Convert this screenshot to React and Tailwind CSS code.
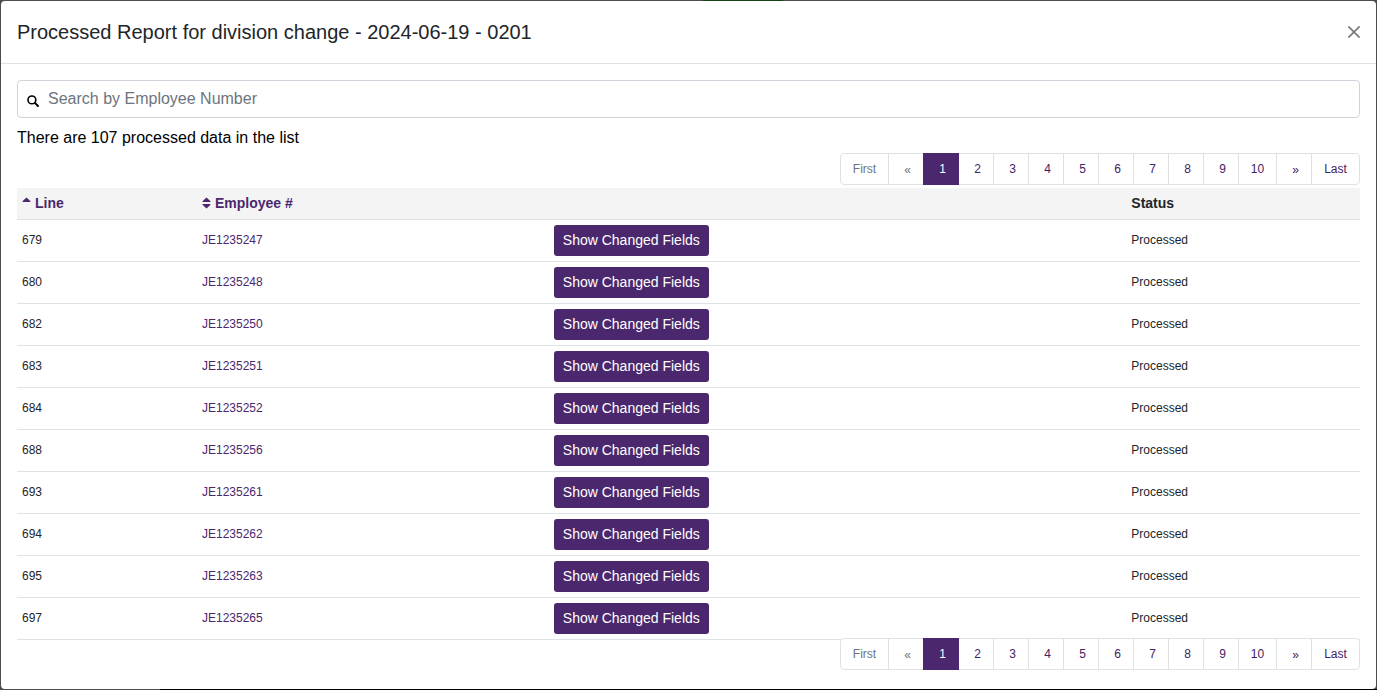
import React, { useState } from "react";

const rows = [
  [679, "JE1235247"],
  [680, "JE1235248"],
  [682, "JE1235250"],
  [683, "JE1235251"],
  [684, "JE1235252"],
  [688, "JE1235256"],
  [693, "JE1235261"],
  [694, "JE1235262"],
  [695, "JE1235263"],
  [697, "JE1235265"],
];

const pages = [1, 2, 3, 4, 5, 6, 7, 8, 9, 10];

function PageButton({ children, className, ...props }) {
  return (
    <li className="-ml-px first:ml-0">
      <button
        type="button"
        className={`flex h-8 items-center justify-center border text-xs ${className}`}
        {...props}
      >
        {children}
      </button>
    </li>
  );
}

function Pagination({ label, className }) {
  const [page, setPage] = useState(1);
  const idle = "border-[#dee2e6] bg-white text-[#3f2263]";
  const muted = "border-[#dee2e6] bg-white text-[#6c757d]";
  return (
    <nav aria-label={label} className={`relative flex justify-end ${className}`}>
      <ul className="flex">
        <PageButton className={`w-[49px] rounded-l ${muted}`} onClick={() => setPage(1)}>
          First
        </PageButton>
        <PageButton
          aria-label="Previous"
          className={`w-9 pt-0.5 pl-[3px] ${muted}`}
          onClick={() => setPage(Math.max(1, page - 1))}
        >
          «
        </PageButton>
        {pages.map((n) => (
          <PageButton
            key={n}
            aria-current={n === page ? "page" : undefined}
            className={`${n === 10 ? "w-[39px]" : "w-9 pl-[3px]"} ${
              n === page ? "relative border-[#4b286d] bg-[#4b286d] text-white" : idle
            }`}
            onClick={() => setPage(n)}
          >
            {n}
          </PageButton>
        ))}
        <PageButton
          aria-label="Next"
          className={`w-9 pt-0.5 pl-[3px] ${idle}`}
          onClick={() => setPage(Math.min(10, page + 1))}
        >
          »
        </PageButton>
        <PageButton className={`w-[49px] rounded-r ${idle}`} onClick={() => setPage(10)}>
          Last
        </PageButton>
      </ul>
    </nav>
  );
}

function SortIcon({ both }) {
  return (
    <svg viewBox="0 0 9 12" className="h-3 w-[9px]" fill="currentColor" aria-hidden="true">
      <path d="M4.5 0.4 8.5 4.2Q8.8 5 8 5H1Q.2 5 .5 4.2Z" />
      {both && <path d="M4.5 11.6 8.5 7.8Q8.8 7 8 7H1Q.2 7 .5 7.8Z" />}
    </svg>
  );
}

export default function App() {
  return (
    <div className="min-h-screen bg-[#4d4d4d] bg-[linear-gradient(#174217,#174217),linear-gradient(#000,#000)] bg-[length:80px_1px,calc(100%-160px)_1px] bg-[position:703px_0,100%_100%] bg-no-repeat p-px font-['Liberation_Sans',Arial,sans-serif] text-[#212529]">
      <div
        role="dialog"
        aria-labelledby="report-title"
        className="min-h-[calc(100vh-2px)] rounded bg-white"
      >
        <header className="flex items-center justify-between border-b border-[#dee2e6] p-4">
          <h1 id="report-title" className="text-xl leading-[30px]">
            Processed Report for division change - 2024-06-19 - 0201
          </h1>
          <button type="button" aria-label="Close" className="text-[#777]">
            <svg
              viewBox="0 0 12 12"
              className="h-3 w-3"
              fill="none"
              stroke="currentColor"
              strokeWidth="1.6"
              aria-hidden="true"
            >
              <path d="M.4.4 11.6 11.6M11.6.4.4 11.6" />
            </svg>
          </button>
        </header>

        <main className="px-4 pt-4 pb-4">
          <label className="flex h-[38px] items-center gap-[9px] rounded border border-[#ced4da] px-[9px]">
            <svg
              viewBox="0 0 12 12"
              className="mt-1 h-3 w-3 shrink-0 text-black"
              fill="none"
              stroke="currentColor"
              strokeLinecap="round"
              aria-hidden="true"
            >
              <circle cx="4.9" cy="4.9" r="3.9" strokeWidth="1.6" />
              <path d="M8 8 11 11" strokeWidth="1.9" />
            </svg>
            <input
              type="text"
              aria-label="Search by Employee Number"
              placeholder="Search by Employee Number"
              className="h-6 min-w-0 flex-1 bg-transparent text-base outline-none placeholder:text-[#6c757d]"
            />
          </label>
          <p className="mt-2 text-base text-black">There are 107 processed data in the list</p>

          <Pagination label="Top pages" className="mt-[3px]" />

          <table className="mt-[3px] w-full table-fixed border-collapse text-left text-xs">
            <colgroup>
              <col className="w-[13.4%]" />
              <col className="w-[26.2%]" />
              <col className="w-[43%]" />
              <col />
            </colgroup>
            <thead>
              <tr className="h-[31px] border-b border-[#dee2e6] bg-[#f4f4f4] text-sm">
                <th scope="col" className="px-[5px]">
                  <button type="button" className="flex items-center gap-1 font-bold text-[#4b286d]">
                    <SortIcon />
                    Line
                  </button>
                </th>
                <th scope="col" className="px-[5px]">
                  <button type="button" className="flex items-center gap-1 font-bold text-[#4b286d]">
                    <SortIcon both />
                    Employee #
                  </button>
                </th>
                <td />
                <th scope="col" className="px-[5px]">
                  Status
                </th>
              </tr>
            </thead>
            <tbody>
              {rows.map(([line, employee]) => (
                <tr key={line} className="h-[42px] border-b border-[#dee2e6]">
                  <td className="px-[5px]">{line}</td>
                  <td className="px-[5px]">
                    <a href="#employee" className="text-[#4b286d]">
                      {employee}
                    </a>
                  </td>
                  <td className="px-[5px]">
                    <button
                      type="button"
                      className="block h-[31px] rounded-[3px] bg-[#4b286d] px-[9px] text-sm whitespace-nowrap text-white"
                    >
                      Show Changed Fields
                    </button>
                  </td>
                  <td className="px-[5px]">Processed</td>
                </tr>
              ))}
            </tbody>
          </table>

          <Pagination label="Bottom pages" className="-mt-0.5" />
        </main>
      </div>
    </div>
  );
}
